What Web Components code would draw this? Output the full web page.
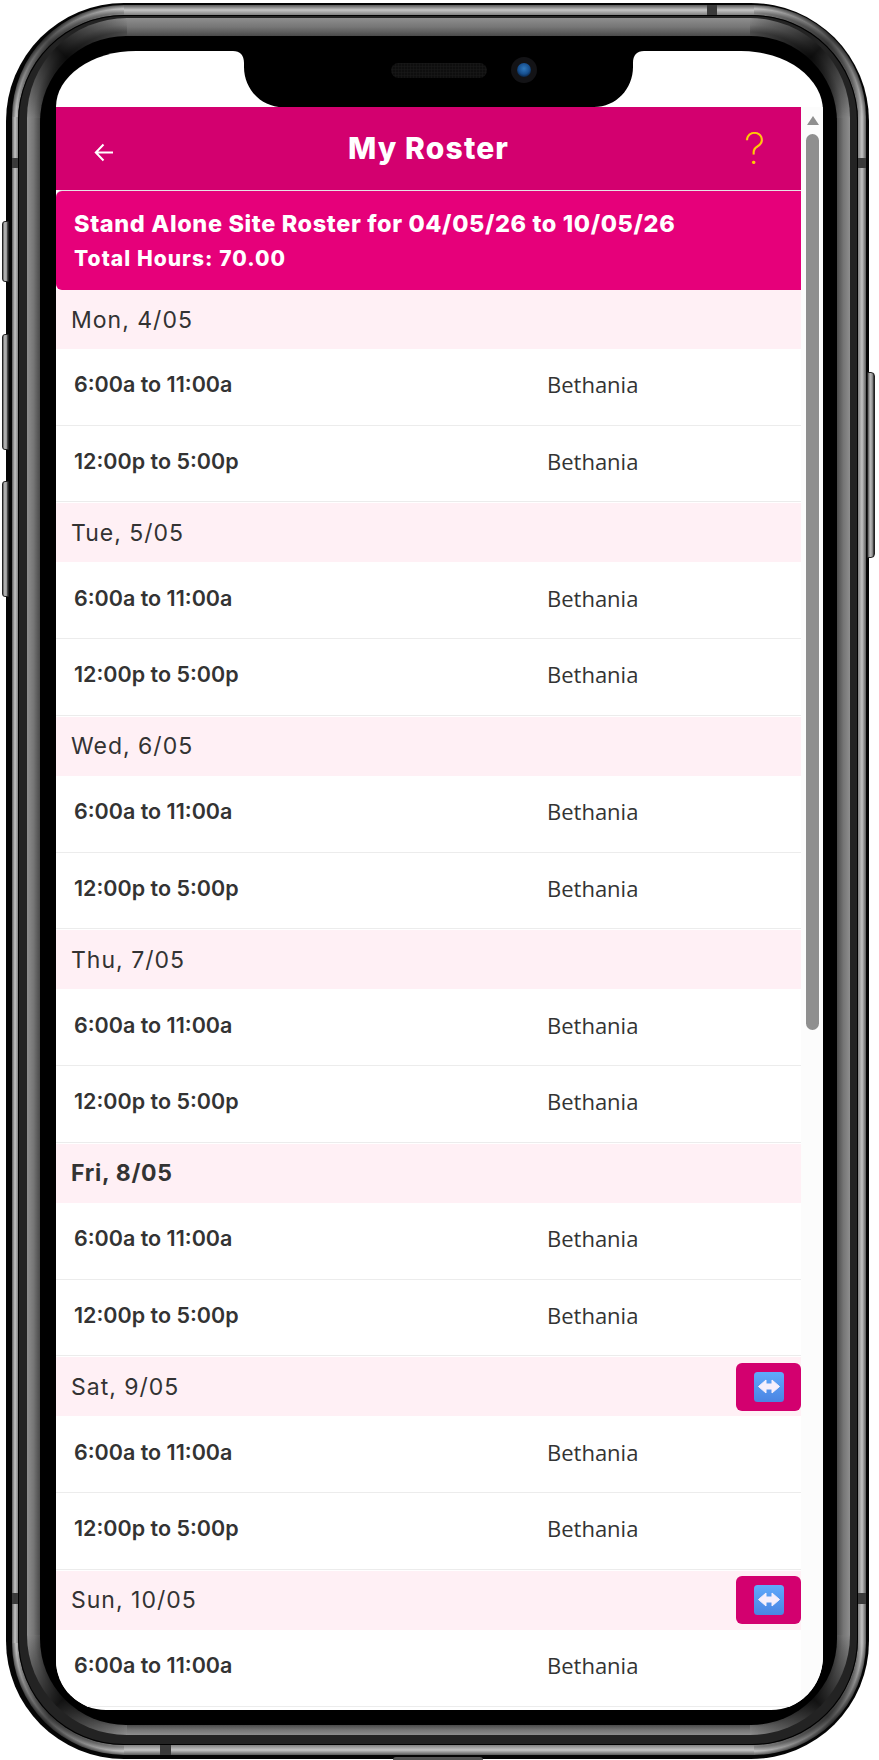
<!DOCTYPE html>
<html lang="en">
<head>
<meta charset="utf-8">
<title>My Roster</title>
<style>
	html, body {
		margin: 0;
		background: #fff;
		height: 1760px;
		overflow: hidden;
	}
</style>
</head>
<body>
<phone-frame>
	<roster-app>
		<roster-header slot="header" title="My Roster"></roster-header>
		<roster-banner>
			<span slot="title">Stand Alone Site Roster for 04/05/26 to 10/05/26</span>
			<span slot="total">Total Hours: 70.00</span>
		</roster-banner>
		<roster-day label="Mon, 4/05"><roster-row time="6:00a to 11:00a" site="Bethania"></roster-row><roster-row time="12:00p to 5:00p" site="Bethania"></roster-row></roster-day>
		<roster-day label="Tue, 5/05"><roster-row time="6:00a to 11:00a" site="Bethania"></roster-row><roster-row time="12:00p to 5:00p" site="Bethania"></roster-row></roster-day>
		<roster-day label="Wed, 6/05"><roster-row time="6:00a to 11:00a" site="Bethania"></roster-row><roster-row time="12:00p to 5:00p" site="Bethania"></roster-row></roster-day>
		<roster-day label="Thu, 7/05"><roster-row time="6:00a to 11:00a" site="Bethania"></roster-row><roster-row time="12:00p to 5:00p" site="Bethania"></roster-row></roster-day>
		<roster-day label="Fri, 8/05" today><roster-row time="6:00a to 11:00a" site="Bethania"></roster-row><roster-row time="12:00p to 5:00p" site="Bethania"></roster-row></roster-day>
		<roster-day label="Sat, 9/05" swap><roster-row time="6:00a to 11:00a" site="Bethania"></roster-row><roster-row time="12:00p to 5:00p" site="Bethania"></roster-row></roster-day>
		<roster-day label="Sun, 10/05" swap><roster-row time="6:00a to 11:00a" site="Bethania"></roster-row></roster-day>
	</roster-app>
</phone-frame>
<script>
	// Dumb html template string function
	const html = (strings, ...values) => {
		let str = '';
		strings.forEach((string, i) => {
			str += string + (values[i] === undefined ? '' : values[i]);
		});
		return str;
	};

	const HEAD_FONT = '"Inter", "Liberation Sans", sans-serif';
	const BODY_FONT = '"Open Sans", "Noto Sans", sans-serif';

	// Background for one bezel ring: straight strips on the sides, curved bands in the
	// corners with a dark sheen over them. c = [outer, middle, inner] colours.
	const ringBg = (r, pad, t, c, shade, base) => {
		const size = `${r}px ${r}px no-repeat`;
		const corner = (place, at, from) => [
			`conic-gradient(from ${from}deg at ${at}, rgba(0,0,0,0), rgba(0,0,0,${shade}) 45deg, rgba(0,0,0,0) 90deg) ${place} / ${size}`,
			`radial-gradient(circle ${r}px at ${at}, ${c[2]} ${r - t}px, ${c[1]} ${r - t / 2}px, ${c[0]} ${r}px) ${place} / ${size}`
		].join(', ');
		const len = `calc(100% - ${r * 2}px)`;
		const across = `${c[0]}, ${c[1]} 50%, ${c[2]}`;
		return [
			corner('left top', '100% 100%', 270),
			corner('right top', '0% 100%', 0),
			corner('right bottom', '0% 0%', 90),
			corner('left bottom', '100% 0%', 180),
			`linear-gradient(90deg, ${across}) left center / ${pad[3]}px ${len} no-repeat`,
			`linear-gradient(270deg, ${across}) right center / ${pad[1]}px ${len} no-repeat`,
			`linear-gradient(180deg, ${across}) center top / ${len} ${pad[0]}px no-repeat`,
			`linear-gradient(0deg, ${across}) center bottom / ${len} ${pad[2]}px no-repeat`,
			base
		].join(', ');
	};

	// Phone bezel: nested rings around the screen
	customElements.define(
		'phone-frame',
		class extends HTMLElement {
			constructor() {
				super();
				this.attachShadow({ mode: 'open' });
				this.shadowRoot.innerHTML = html`
					<style>
						:host {
							display: block;
							position: relative;
							width: 879px;
							height: 1760px;
							padding: 3px 10px 1px 6px;
							box-sizing: border-box;
						}
						div {
							box-sizing: border-box;
						}
						.ring {
							height: 100%;
						}
						.edge {
							background: #050505;
							border-radius: 118px;
							padding: 2px 3px 4px 6px;
						}
						.light {
							background: ${ringBg(112, [10, 8, 10, 6], 8, ['#5a5a5a', '#c4c4c4', '#808080'], 0.6, '#333')};
							border-radius: 112px;
							padding: 10px 8px 10px 6px;
						}
						.dark {
							background: #232323;
							border-radius: 106px;
							padding: 3px 8px 10px 9px;
							box-shadow: inset 0 0 0 1px #000;
						}
						.grey {
							background: ${ringBg(100, [18, 13, 10, 13], 14, ['#8e8e8e', '#767676', '#4a4a4a'], 0.85, '#222')};
							border-radius: 100px;
							padding: 18px 13px 10px 13px;
						}
						.black {
							background: #000;
							border-radius: 86px;
							padding: 15px 14px 15px 16px;
						}
						.screen {
							height: 100%;
							background: #fff;
							border-radius: 80px 82px 52px 50px / 56px 60px 54px 50px;
							overflow: hidden;
							display: flex;
							flex-direction: column;
						}
						.top {
							flex: 0 0 56px;
							display: flex;
							justify-content: center;
							margin-left: -3px;
						}
						.top svg {
							display: block;
						}
						.app {
							flex: 1;
							min-height: 0;
						}
						.btn {
							position: absolute;
							box-sizing: border-box;
							background: linear-gradient(90deg, #555, #bbb 35%, #999 70%, #222);
							border: 1px solid #222;
						}
						.btn.l {
							left: 2px;
							width: 7px;
							border-radius: 3px 0 0 3px;
						}
						.btn.r {
							left: 867px;
							width: 8px;
							top: 372px;
							height: 186px;
							border-radius: 0 4px 4px 0;
						}
						.band {
							position: absolute;
							background: #3a3a3a;
						}
						.port {
							position: absolute;
							left: 393px;
							top: 1757px;
							width: 90px;
							height: 3px;
							background: #555;
							border-radius: 3px 3px 0 0;
						}
					</style>
					<div class="btn l" style="top:221px;height:61px"></div>
					<div class="btn l" style="top:334px;height:116px"></div>
					<div class="btn l" style="top:481px;height:116px"></div>
					<div class="btn r"></div>
					<div class="ring edge">
						<div class="ring light">
							<div class="ring dark">
								<div class="ring grey">
									<div class="ring black">
										<div class="screen">
											<div class="top">
												<svg width="411" height="56" viewBox="0 0 411 56">
													<defs>
														<pattern id="mesh" width="3" height="3" patternUnits="userSpaceOnUse">
															<rect width="3" height="3" fill="#0e0e0e"/>
															<path d="M0 0H3M0 0V3" stroke="#191919" stroke-width="1"/>
														</pattern>
														<radialGradient id="lens" cx="50%" cy="40%" r="60%">
															<stop offset="0" stop-color="#2f78bd"/>
															<stop offset="0.65" stop-color="#174f8e"/>
															<stop offset="1" stop-color="#0a2547"/>
														</radialGradient>
													</defs>
													<path d="M0 0C7 0 11 4 11 12V16C11 38 28 56 50 56H361C383 56 400 38 400 16V12C400 4 404 0 411 0Z" fill="#000"/>
													<rect x="158" y="12" width="96" height="15" rx="7.5" fill="url(#mesh)"/>
													<circle cx="291" cy="19" r="13" fill="#131316"/>
													<circle cx="291" cy="19" r="7" fill="url(#lens)"/>
												</svg>
											</div>
											<div class="app"><slot></slot></div>
										</div>
									</div>
								</div>
							</div>
						</div>
					</div>
					<div class="band" style="left:12px;top:158px;width:6px;height:10px"></div>
					<div class="band" style="left:858px;top:158px;width:8px;height:10px"></div>
					<div class="band" style="left:707px;top:5px;width:10px;height:10px"></div>
					<div class="band" style="left:160px;top:1745px;width:11px;height:10px"></div>
					<div class="band" style="left:12px;top:1593px;width:6px;height:11px"></div>
					<div class="band" style="left:858px;top:1593px;width:8px;height:11px"></div>
					<div class="port"></div>
				`;
			}
		}
	);

	// App body: scrolling list plus the scrollbar gutter
	customElements.define(
		'roster-app',
		class extends HTMLElement {
			constructor() {
				super();
				this.attachShadow({ mode: 'open' });
				this.shadowRoot.innerHTML = html`
					<style>
						:host {
							display: flex;
							height: 100%;
							overflow: hidden;
							color: #333;
						}
						.list {
							flex: 1;
							min-width: 0;
							overflow: hidden;
						}
						.gutter {
							flex: 0 0 22px;
							box-sizing: border-box;
							background: #fcfcfc;
							padding: 9px 4px 0 5px;
							display: flex;
							flex-direction: column;
						}
						.arrow {
							width: 0;
							height: 0;
							align-self: center;
							border-left: 6.5px solid transparent;
							border-right: 6.5px solid transparent;
							border-bottom: 9px solid #8f8f8f;
						}
						.thumb {
							margin-top: 9px;
							height: 896px;
							background: #8f8f8f;
							border-radius: 7px;
						}
					</style>
					<div class="list"><slot name="header"></slot><slot></slot></div>
					<div class="gutter"><div class="arrow"></div><div class="thumb"></div></div>
				`;
			}
		}
	);

	customElements.define(
		'roster-header',
		class extends HTMLElement {
			constructor() {
				super();
				this.attachShadow({ mode: 'open' });
				this.shadowRoot.innerHTML = html`
					<style>
						:host {
							display: grid;
							grid-template-columns: 80px 1fr 80px;
							align-items: center;
							height: 83px;
							background: #d3006f;
							color: #fff;
						}
						.back {
							display: block;
							margin: 8px 0 0 38px;
						}
						h1 {
							margin: 0 0 2px;
							font: 800 30px/1 ${HEAD_FONT};
							letter-spacing: 1.15px;
							text-align: center;
						}
						.help {
							justify-self: end;
							margin: 0 36px 1px 0;
							color: #ffcc00;
							font: 200 43px/1 ${HEAD_FONT};
						}
					</style>
					<svg class="back" width="20" height="19" viewBox="0 0 20 19" fill="none" stroke="#fff" stroke-width="2">
						<path d="M19 9.5H2M9.5 1.5L1.8 9.5L9.5 17.5"/>
					</svg>
					<h1>${this.getAttribute('title')}</h1>
					<div class="help">?</div>
				`;
			}
		}
	);

	customElements.define(
		'roster-banner',
		class extends HTMLElement {
			constructor() {
				super();
				this.attachShadow({ mode: 'open' });
				this.shadowRoot.innerHTML = html`
					<style>
						:host {
							display: flex;
							flex-direction: column;
							box-sizing: border-box;
							height: 99px;
							margin-top: 1px;
							padding: 17px 0 0 18px;
							background: #e6007a;
							color: #fff;
							border-radius: 6px 0 0 6px;
							box-shadow: 0 -1px 0 #e8e0e4;
						}
						.title {
							font: 800 23.5px/32px ${HEAD_FONT};
							letter-spacing: 0.62px;
						}
						.total {
							font: 800 21px/32px ${HEAD_FONT};
							letter-spacing: 1.05px;
							margin-top: 3px;
						}
					</style>
					<div class="title"><slot name="title"></slot></div>
					<div class="total"><slot name="total"></slot></div>
				`;
			}
		}
	);

	customElements.define(
		'roster-day',
		class extends HTMLElement {
			constructor() {
				super();
				const swap = this.hasAttribute('swap');
				const today = this.hasAttribute('today');
				this.attachShadow({ mode: 'open' });
				this.shadowRoot.innerHTML = html`
					<style>
						:host {
							display: block;
							margin-bottom: 1.3px;
						}
						.head {
							display: flex;
							align-items: center;
							justify-content: space-between;
							height: 59px;
							padding-left: 15px;
							background: #fff0f5;
						}
						.label {
							margin-top: 1px;
							font: ${today ? 700 : 400} 23px/1 ${HEAD_FONT};
							letter-spacing: ${today ? 0.7 : 1}px;
						}
						.swap {
							display: flex;
							align-items: center;
							justify-content: center;
							width: 65px;
							height: 48px;
							background: #d3006f;
							border-radius: 6px;
						}
						svg {
							display: block;
						}
					</style>
					<div class="head">
						<span class="label">${this.getAttribute('label')}</span>
						${swap ? html`<div class="swap">
							<svg width="30" height="30" viewBox="0 0 30 30">
								<defs>
									<linearGradient id="tile" x1="0" y1="0" x2="0" y2="1">
										<stop offset="0" stop-color="#60aafc"/>
										<stop offset="1" stop-color="#4a84e2"/>
									</linearGradient>
								</defs>
								<rect width="30" height="30" rx="3.5" fill="url(#tile)"/>
								<path d="M4.5 14.5L12 8V12H18V8L25.5 14.5L18 21V17H12V21Z" fill="#f6effc" stroke="#f6effc" stroke-width="1" stroke-linejoin="round"/>
							</svg>
						</div>` : ''}
					</div>
					<slot></slot>
				`;
			}
		}
	);

	customElements.define(
		'roster-row',
		class extends HTMLElement {
			constructor() {
				super();
				this.attachShadow({ mode: 'open' });
				this.shadowRoot.innerHTML = html`
					<style>
						:host {
							display: grid;
							grid-template-columns: 473px 1fr;
							align-items: center;
							box-sizing: border-box;
							height: 76.6px;
							padding: 0 0 5px 18px;
							background: #fff;
							border-bottom: 1px solid #ececec;
							font-family: ${BODY_FONT};
							font-size: 22px;
						}
						.time {
							margin-top: 2px;
							font: 600 21.5px/1.3 ${HEAD_FONT};
						}
					</style>
					<div class="time">${this.getAttribute('time')}</div>
					<div class="site">${this.getAttribute('site')}</div>
				`;
			}
		}
	);
</script>
</body>
</html>
